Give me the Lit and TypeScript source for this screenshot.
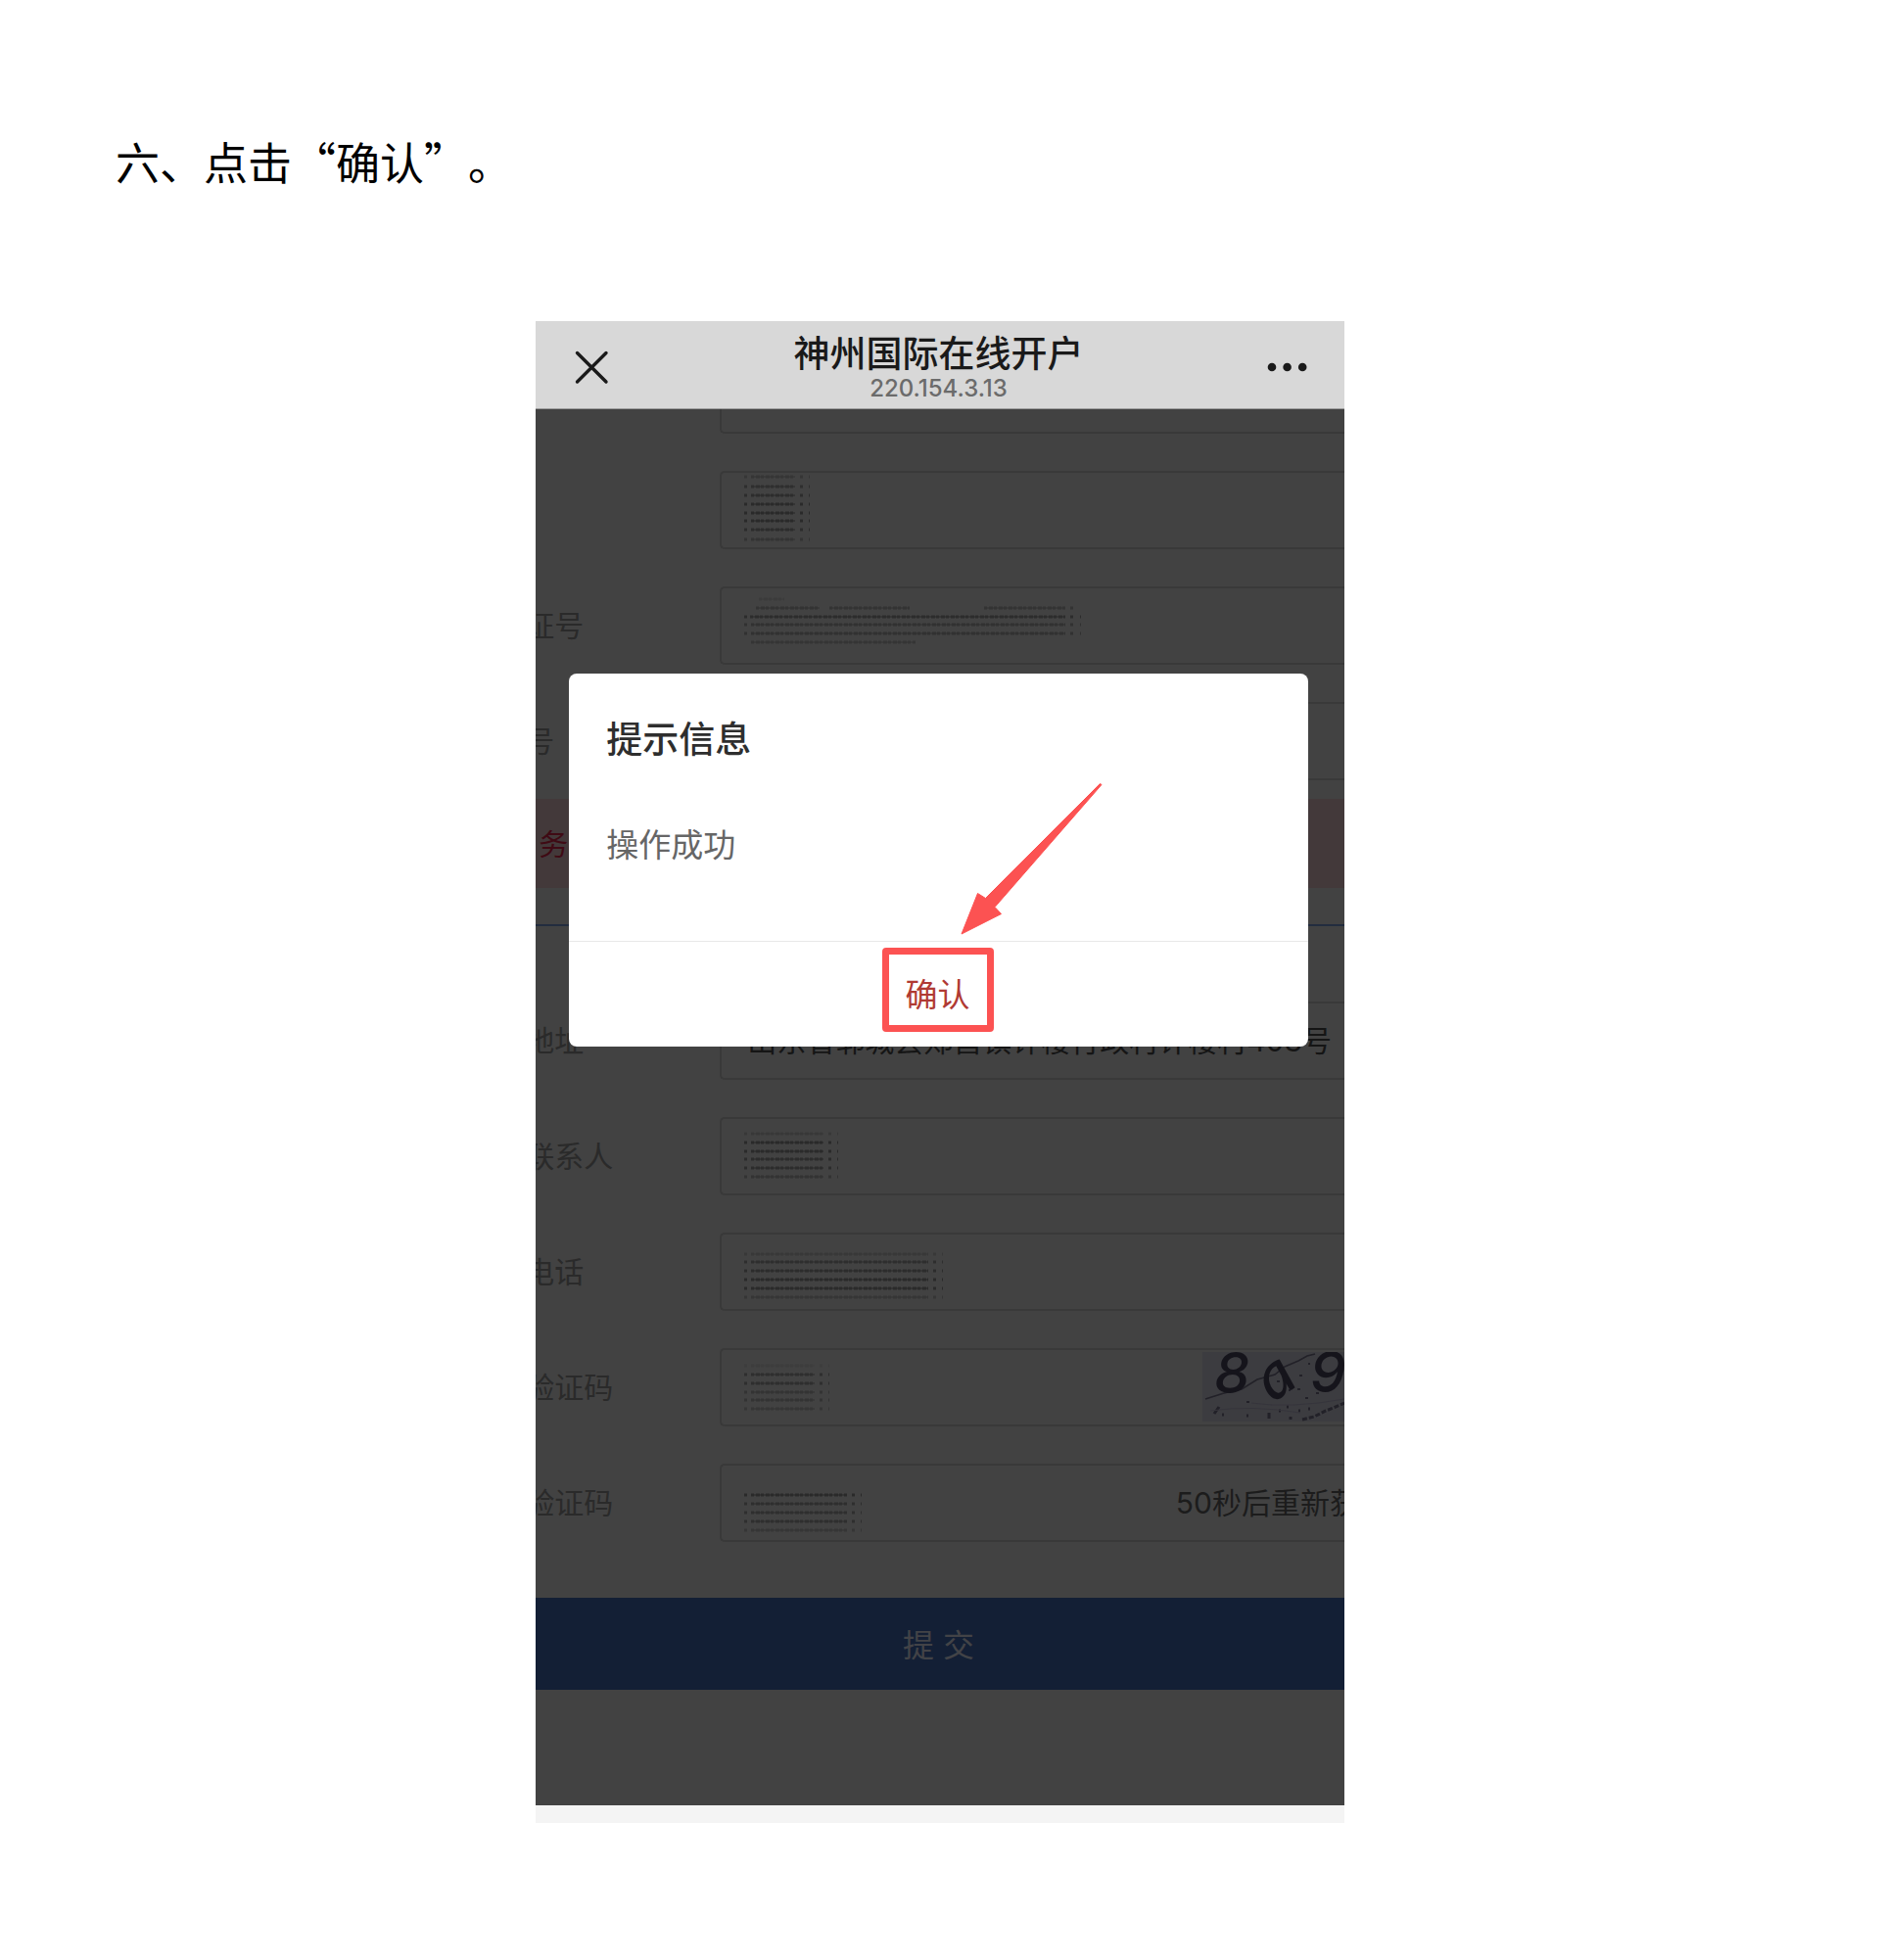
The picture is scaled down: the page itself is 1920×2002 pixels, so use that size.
import { LitElement, html, svg, css, nothing } from "lit";
import { customElement, property } from "lit/decorators.js";

/** One horizontal strip of the blur that hides a private value. */
interface Strip {
  y: number;
  spans: [number, number][];
  tone: number;
}

interface Row {
  id: string;
  label: string;
  value?: string;
  strips?: Strip[];
  extra?: "captcha" | "countdown";
}

/** Evenly shaded strips with fading first and last lines and loose dots at both ends. */
function strips(ys: number[], end: number, tones: number[]): Strip[] {
  return ys.map((y, i) => ({
    y,
    spans: [[25, 28], [32, end], [end + 5, end + 8], [end + 14, end + 15]],
    tone: tones[i],
  }));
}

const idStrips: Strip[] = [
  { y: 13, spans: [[40, 66]], tone: 0.25 },
  { y: 22, spans: [[37, 102], [112, 194], [270, 353], [358, 361]], tone: 0.6 },
  { y: 31, spans: [[25, 28], [31, 353], [358, 361], [368, 369]], tone: 0.9 },
  { y: 39, spans: [[25, 28], [32, 353], [358, 361], [368, 369]], tone: 0.7 },
  { y: 48, spans: [[25, 28], [32, 353], [358, 361], [368, 369]], tone: 0.7 },
  { y: 57, spans: [[32, 200]], tone: 0.5 },
];

const upperRows: Row[] = [
  { id: "name", label: "", strips: strips([6, 16, 25, 34, 43, 51, 60, 70], 77, [0.5, 0.8, 0.9, 1, 1, 1, 0.9, 0.6]) },
  { id: "idno", label: "证号", strips: idStrips },
  { id: "no", label: "号" },
];

const lowerRows: Row[] = [
  { id: "address", label: "地址", value: "山东省郓城县郑营镇许楼行政村许楼村403号" },
  { id: "contact", label: "联系人", strips: strips([17, 26, 35, 43, 52, 61], 106, [0.4, 1, 1, 0.9, 0.9, 0.6]) },
  { id: "phone", label: "电话", strips: strips([22, 30, 39, 48, 57, 66], 213, [0.4, 0.8, 0.9, 1, 1, 0.5]) },
  { id: "captcha", label: "验证码", strips: strips([18, 27, 36, 45, 53, 62], 97, [0.2, 0.8, 0.8, 0.6, 0.6, 0.5]), extra: "captcha" },
  { id: "sms", label: "验证码", strips: strips([32, 41, 50, 59, 68], 130, [1, 0.8, 0.8, 0.8, 0.5]), extra: "countdown" },
];

@customElement("form-row")
export class FormRow extends LitElement {
  @property({ attribute: false }) row!: Row;

  static styles = css`
    :host { display: block; }
    .row { display: grid; grid-template-columns: 199px 1fr; align-items: center; }
    .label { color: #2a2a2a; font-size: 30px; line-height: 40px; white-space: nowrap; }
    .field {
      display: flex; box-sizing: border-box; height: 80px; overflow: hidden;
      border: 2px solid #393939; border-right: 0; border-radius: 5px 0 0 5px;
    }
    .input {
      flex: 1; min-width: 0; box-sizing: border-box; margin: 0; border: 0; outline: 0;
      padding: 0 4px 4px 26px; background: transparent; color: #151515;
      font: inherit; font-size: 30px;
    }
    .strips { flex: none; }
    .captcha { flex: none; margin-top: 2px; }
    .countdown {
      flex: none; width: 172px; padding: 0 0 4px; border: 0; background: transparent;
      color: #1c1c1c; font: inherit; font-size: 30px; text-align: left; white-space: nowrap;
      overflow: hidden;
    }
  `;

  private renderStrips(list: Strip[]) {
    return html`<svg class="strips" width="380" height="76" viewBox="2 2 380 76" aria-hidden="true">
      ${list.map((s) => svg`<g opacity=${s.tone}>
        ${s.spans.map(([a, b]) => svg`
          <path d="M${a} ${s.y}H${b}" stroke="#343434" stroke-width="2" />
          <path d="M${a} ${s.y}H${b}" stroke="#2a2a2a" stroke-width="3" stroke-dasharray="3 2 4 1" />`)}
      </g>`)}
    </svg>`;
  }

  private renderCaptcha() {
    return html`<svg class="captcha" width="145" height="71" viewBox="0 0 145 71" role="img" aria-label="验证码图片">
      <rect width="145" height="71" fill="#3c3c40" />
      <g fill="none" stroke="#222128">
        <path d="M3 48L22 42L40 38L56 28L74 23L84 15L98 9L107 4L115 2" stroke-width="1.500" />
        <path d="M102 69L114 66L126 60L134 57L145 52" stroke-width="3" stroke-dasharray="5 2" />
        <path d="M12 63L17 56M68 62V68M20 64h2M45 65h2M90 66v3M78 60h2M86 56h2M98 60h2M108 58h2" stroke-width="3" />
        <path d="M45 51h3M76 30h3M99 24h3M97 38h3M105 47h3M116 42h3M108 12h2M88 39h2" stroke-width="2" />
        <path d="M50 52Q90 58 145 48M8 60Q50 54 100 62" stroke="#36353c" />
      </g>
      <g fill="#15141b" font-family="Inter, sans-serif" font-weight="500">
        <text x="12" y="42" font-size="58" font-style="italic">8</text>
        <text x="60" y="46" font-size="66" font-family="Lato, sans-serif" font-style="italic" transform="rotate(-36 76 30)">a</text>
        <text x="110" y="41" font-size="58" font-style="italic">9</text>
      </g>
    </svg>`;
  }

  render() {
    const r = this.row;
    return html`<div class="row">
      <label class="label" for=${r.id}>${r.label}</label>
      <div class="field">
        ${r.strips ? this.renderStrips(r.strips) : nothing}
        <input class="input" id=${r.id} type="text" .value=${r.value ?? ""} />
        ${r.extra === "captcha" ? this.renderCaptcha() : nothing}
        ${r.extra === "countdown" ? html`<button class="countdown" type="button">50秒后重新获取</button>` : nothing}
      </div>
    </div>`;
  }
}

@customElement("app-root")
export class AppRoot extends LitElement {
  static styles = css`
    :host {
      display: block; background: #fff;
      font-family: Inter, "Noto Sans CJK SC", sans-serif;
    }
    .page { padding: 135px 0 140px; }
    .step {
      margin: 0 118px 133px; color: #000; font-family: "Noto Sans CJK SC", sans-serif;
      font-size: 45px; line-height: 60px; font-weight: 400; text-spacing-trim: space-all;
    }
    .phone { width: 43%; margin: 0 auto; overflow: hidden; }
    .bar {
      display: grid; grid-template-columns: 120px 1fr 120px; align-items: center;
      height: 90px; box-sizing: border-box; border-bottom: 1px solid #9a9a9a;
      background: #d8d8d8; color: #1a1a1a;
    }
    .icon { display: flex; padding: 4px 0 0; border: 0; background: transparent; color: inherit; }
    .close { padding-left: 39px; }
    .more { justify-content: flex-end; padding-right: 36px; }
    .titles { padding: 4px 3px 0 0; text-align: center; white-space: nowrap; }
    .title { margin: 0; font-size: 37px; line-height: 44px; font-weight: 500; }
    .address { color: #6b6b6b; font-size: 24px; line-height: 26px; font-weight: 500; }
    .screen { position: relative; padding-bottom: 118px; background: #424242; }
    .form { margin: 0 0 0 -11px; }
    .stub {
      height: 25px; box-sizing: border-box; margin: 0 0 38px 199px;
      border: solid #393939; border-width: 0 0 2px 2px; border-radius: 0 0 0 5px;
    }
    .rows { display: grid; gap: 38px; }
    .notice {
      height: 91px; box-sizing: border-box; margin: 19px 0 37px; padding-left: 14px;
      background: #43393a; color: #3f0a14; font-size: 30px; line-height: 92px;
    }
    .rule { height: 2px; margin: 0 0 77px; border: 0; background: #222c3e; }
    .submit {
      display: block; width: 100%; height: 94px; margin-top: 57px; padding: 0 0 2px 8px; border: 0;
      background: #131f35; color: #424347; font: inherit; font-size: 32px;
    }
    .foot { height: 18px; background: #f4f4f4; }
    .dialog {
      position: absolute; top: 270px; left: 34px; right: 37px;
      border-radius: 8px; background: #fff;
    }
    .message { padding: 46px 38px 74px; }
    .heading { margin: 0 0 61px; color: #2e2e2e; font-size: 37px; line-height: 44px; font-weight: 500; }
    .text { margin: 0; color: #666; font-size: 33px; line-height: 48px; }
    .actions { position: relative; border-top: 1px solid #e8e8e8; }
    .confirm {
      display: block; width: 100%; height: 107px; padding: 0 2px 4px 0; border: 0;
      background: transparent; color: #b03a33; font: inherit; font-size: 33px;
    }
    .mark {
      position: absolute; top: 6px; left: 50%; margin-left: -58px; width: 114px; height: 86px;
      box-sizing: border-box; border: 7px solid #fc5252; border-radius: 4px; pointer-events: none;
    }
    .arrow { position: absolute; bottom: 114px; left: 50%; margin-left: 22px; pointer-events: none; }
  `;

  render() {
    return html`<main class="page">
      <p class="step">六、点击“确认”。</p>
      <section class="phone">
        <header class="bar">
          <button class="icon close" type="button" aria-label="关闭">
            <svg width="36" height="36" viewBox="0 0 36 36" fill="none" stroke="currentColor" stroke-width="3.4" stroke-linecap="round">
              <path d="M3.5 3.5L33 33M33 3.5L3.5 33" />
            </svg>
          </button>
          <div class="titles">
            <h1 class="title">神州国际在线开户</h1>
            <div class="address">220.154.3.13</div>
          </div>
          <button class="icon more" type="button" aria-label="更多">
            <svg width="46" height="12" viewBox="0 0 46 12" fill="currentColor">
              <circle cx="8" cy="6" r="4.3" /><circle cx="23.6" cy="6" r="4.3" /><circle cx="39.2" cy="6" r="4.3" />
            </svg>
          </button>
        </header>
        <div class="screen">
          <form class="form" @submit=${(e: Event) => e.preventDefault()}>
            <div class="stub"></div>
            <div class="rows">${upperRows.map((r) => html`<form-row .row=${r}></form-row>`)}</div>
            <div class="notice">务</div>
            <hr class="rule" />
            <div class="rows">${lowerRows.map((r) => html`<form-row .row=${r}></form-row>`)}</div>
            <button class="submit" type="submit">提 交</button>
          </form>
          <div class="dialog" role="dialog" aria-labelledby="dialog-title">
            <div class="message">
              <h2 class="heading" id="dialog-title">提示信息</h2>
              <p class="text">操作成功</p>
            </div>
            <div class="actions">
              <button class="confirm" type="button">确认</button>
              <div class="mark"></div>
              <svg class="arrow" width="145" height="156" viewBox="0 0 145 156" aria-hidden="true">
                <path d="M1 155L17.5 113.5L25.5 118.5L142.5 1.5L144 2.5L35 127.5L41.5 134.5Z" fill="#fc5252" stroke="#fc5252" stroke-linejoin="round" />
              </svg>
            </div>
          </div>
        </div>
        <div class="foot"></div>
      </section>
    </main>`;
  }
}
